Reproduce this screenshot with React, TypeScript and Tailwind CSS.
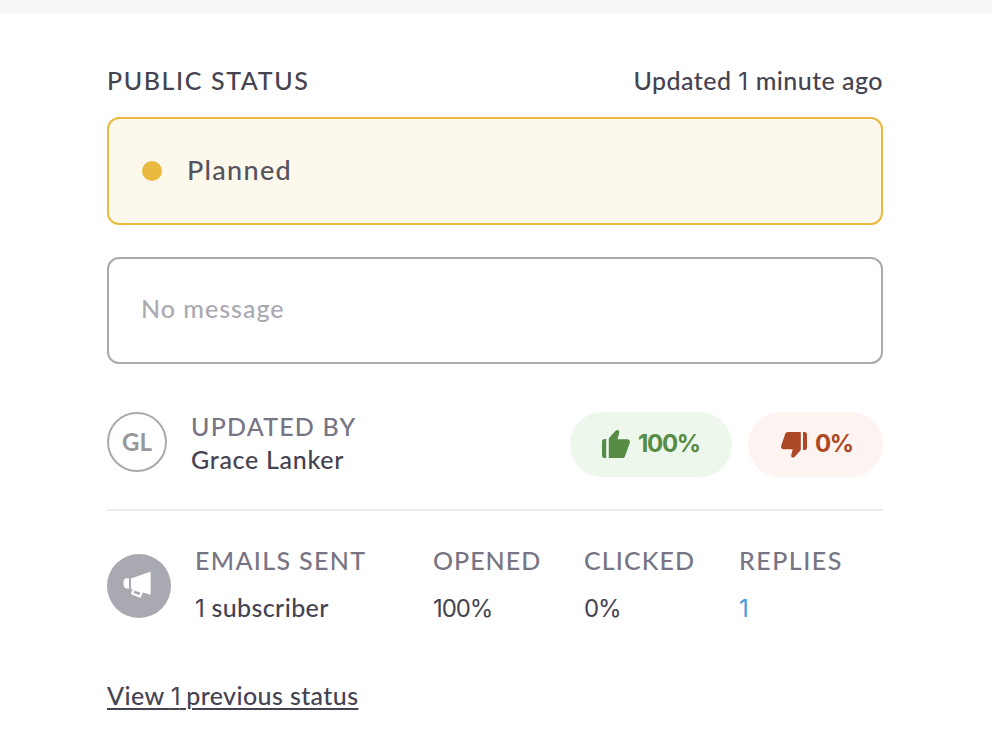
import type { ReactNode } from "react";

// Figures use a face whose "1" has no foot
function Num({ children }: { children: ReactNode }) {
  return <span className="font-['Inter',sans-serif] text-[24px] font-normal tracking-[-0.045em]">{children}</span>;
}

function Score({ children }: { children: ReactNode }) {
  return <span className="font-['Inter',sans-serif] text-[24px] font-bold tracking-[-0.055em]">{children}</span>;
}

function ThumbUp() {
  return (
    <svg width="28" height="28" viewBox="0 0 28 28" fill="currentColor">
      <path d="M4.200 9v19H2.600C1.200 28 0 26.800 0 25.400V11.600C0 10.200 1.200 9 2.600 9z" />
      <path d="M6.800 8.200 13.600.8c1.500-1.500 4-.4 3.700 1.900l-1.800 6.500h9.600c2.200 0 3.200 1.700 2.600 3.800l-4.500 12.700c-.5 1.500-1.100 2.300-2.400 2.300h-14z" />
    </svg>
  );
}

function ThumbDown() {
  return (
    <svg width="26" height="27" viewBox="0 0 26 27" fill="currentColor">
      <path d="M22 1h1.500C25 1 26 2.200 26 3.600v12.800c0 1.400-1 2.600-2.500 2.600H22z" />
      <path d="M19.800 1v18l-6.300 7c-1.400 1.300-3.600.3-3.300-1.700l1.500-6H2.600C.8 18.300-.1 16.700.1 15l4-11.700C4.700 1.700 5.400 1 7 1z" />
    </svg>
  );
}

function Megaphone() {
  return (
    <svg className="mb-1 -ml-1" width="28" height="28" viewBox="0 0 28 28" fill="white">
      <path d="M6 8.200v10.200H3.400C1.600 18.400.4 16.300.4 13.300s1.200-5.100 3-5.100z" />
      <path d="M8 8.500 26.500 2c.7-.3 1.200.1 1.200.9v20.800c0 .8-.5 1.200-1.200.9L8 18.800z" />
      <path d="m10.800 19.300-1.700 4.200 7.900 3 1.900-4.600z" fill="#a9a9b2" stroke="white" strokeWidth="2.200" strokeLinejoin="round" />
    </svg>
  );
}

const label = "text-[25px] leading-[32px] text-[#777584] whitespace-nowrap";
const value = "mt-[15px] text-[25px] leading-[32px] whitespace-nowrap";

export default function App() {
  return (
    <div className="h-[736px] w-[992px] overflow-hidden border-t-[14px] border-[#f7f7f7] bg-white font-['Lato',sans-serif] text-[25px] leading-[32px] font-medium text-[#454351]">
      <div className="ml-[107px] w-[776px] pt-[50px]">
        <div className="flex h-[53px] justify-between">
          <div className="whitespace-nowrap tracking-[1.6px]">PUBLIC STATUS</div>
          <div className="whitespace-nowrap tracking-[0.45px]">
            Updated <Num>1</Num><span className="ml-[2px]"> minute ago</span>
          </div>
        </div>

        <div className="flex h-[108px] items-center rounded-xl border-2 border-[#e8ba3f] bg-[#fcf8eb] pl-[33px]">
          <span className="size-5 rounded-full bg-[#e8ba3f]" />
          <span className="ml-[25px] pb-[3px] text-[27px] tracking-[1.3px] text-[#54535e]">Planned</span>
        </div>

        <div className="mt-8 flex h-[107px] items-center rounded-xl border-2 border-[#a9a9b2] pb-[5px] pl-8 tracking-[1px] text-[#a9a9b2]">
          No message
        </div>

        <div className="mt-12 flex h-[65px] justify-between">
          <div className="flex">
            <div className="flex size-[60px] items-center justify-center rounded-full border-2 border-[#a9a9b2] text-[24px] font-bold text-[#96989d]">
              GL
            </div>
            <div className="-mt-[2px] ml-6 whitespace-nowrap">
              <div className="tracking-[1.2px] text-[#777584]">UPDATED BY</div>
              <div className="mt-px tracking-[0.7px]">Grace Lanker</div>
            </div>
          </div>
          <div className="flex gap-4">
            <div className="flex w-[162px] items-center gap-[8px] rounded-full bg-[#edf7ec] pb-px pl-8 text-[#568c45]">
              <ThumbUp />
              <Score>100%</Score>
            </div>
            <div className="flex w-[135px] items-center gap-[8px] rounded-full bg-[#fdf4f1] pb-px pl-[33px] text-[#ad4826]">
              <ThumbDown />
              <Score>0%</Score>
            </div>
          </div>
        </div>

        <div className="mt-8 h-[2px] bg-[#ececf0]" />

        <div className="mt-[33px] grid grid-cols-[88px_238px_151px_155px_1fr]">
          <div className="mt-[10px] flex size-16 items-center justify-center rounded-full bg-[#a9a9b2]">
            <Megaphone />
          </div>
          <div>
            <div className={`${label} tracking-[1.35px]`}>EMAILS SENT</div>
            <div className={`${value} tracking-[0.4px]`}>
              <Num>1</Num><span className="ml-px"> subscriber</span>
            </div>
          </div>
          <div>
            <div className={`${label} tracking-[1px]`}>OPENED</div>
            <div className={value}><Num>100%</Num></div>
          </div>
          <div>
            <div className={`${label} tracking-[1.1px]`}>CLICKED</div>
            <div className={value}><Num>0%</Num></div>
          </div>
          <div>
            <div className={`${label} tracking-[1.5px]`}>REPLIES</div>
            <a className={`${value} block text-[#459cdc]`}><Num>1</Num></a>
          </div>
        </div>

        <a className="mt-[54px] inline-block whitespace-nowrap tracking-[0.4px] underline decoration-2 underline-offset-[3px]">
          View <Num>1</Num> previous status
        </a>
      </div>
    </div>
  );
}
